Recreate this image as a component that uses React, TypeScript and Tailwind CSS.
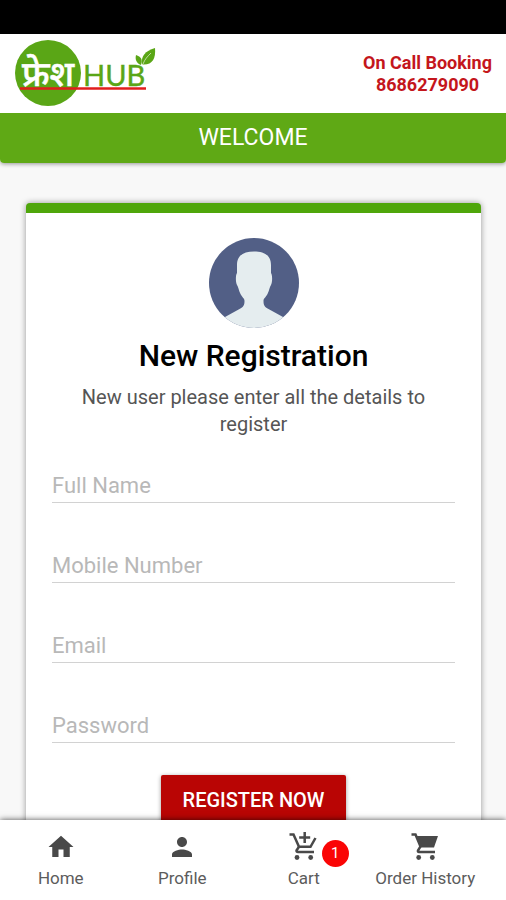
import React, { useState } from 'react';
import { MdHome, MdPerson } from 'react-icons/md';

const CartAddIcon: React.FC<{ size: number }> = ({ size }) => (
  <svg viewBox="0 0 30 30" width={size} height={size} fill="none" stroke="currentColor" strokeWidth="2.500" aria-hidden="true">
    <path d="M0.500 2.500H4.500L10 14.800H21.500L26.500 6" />
    <path d="M10 14.800L7.500 18.500Q7.300 20 9 20H25" />
    <path d="M15.700 0V11M10.200 5.500H21.200" />
    <circle cx="8" cy="25.500" r="2.400" fill="currentColor" stroke="none" />
    <circle cx="21.700" cy="25.500" r="2.400" fill="currentColor" stroke="none" />
  </svg>
);

const CartIcon: React.FC<{ size: number }> = ({ size }) => (
  <svg viewBox="0 0 30 30" width={size} height={size} fill="none" stroke="currentColor" strokeWidth="2.500" aria-hidden="true">
    <path d="M1.500 2.500H5.500L10.500 14.500L8 18.500Q7.500 20 9 20H25" />
    <path d="M5.500 4H28L24 15.500H10.500Z" fill="currentColor" stroke="none" />
    <circle cx="8.700" cy="25.500" r="2.400" fill="currentColor" stroke="none" />
    <circle cx="22.300" cy="25.500" r="2.400" fill="currentColor" stroke="none" />
  </svg>
);

const fields = [
  { name: 'fullName', label: 'Full Name', type: 'text' },
  { name: 'mobile', label: 'Mobile Number', type: 'tel' },
  { name: 'email', label: 'Email', type: 'email' },
  { name: 'password', label: 'Password', type: 'password' },
];

const tabs = [
  { label: 'Home', icon: MdHome, count: 0 },
  { label: 'Profile', icon: MdPerson, count: 0 },
  { label: 'Cart', icon: CartAddIcon, count: 1 },
  { label: 'Order History', icon: CartIcon, count: 0 },
];

const Logo: React.FC = () => (
  <svg viewBox="0 0 144 68" className="w-36 h-17" role="img" aria-label="Fresh Hub">
    <circle cx="34" cy="33" r="33" fill="#5aa616" />
    <text x="8" y="46" fontSize="35" fontWeight="500" fill="#fff" stroke="#fff" strokeWidth="0.5" fontFamily="'Noto Sans Devanagari', 'Noto Sans', sans-serif">फ्रेश</text>
    <text x="69" y="46" fontSize="29" fill="#5aa616" stroke="#5aa616" strokeWidth="0.4" fontFamily="Lato, sans-serif">HUB</text>
    <path d="M6 48.5H132" stroke="#e11d1d" strokeWidth="2.5" />
    <path d="M128 24C127 16 131 11 141 8C142 19 138 25 129 24.5Z" fill="#5aa616" />
    <path d="M127 25C122 23 121 19 122 15C127 17 129 19 127 25Z" fill="#5aa616" />
    <path d="M129 24C131 19 133 17 137 13" stroke="#fff" strokeWidth="0.6" fill="none" />
  </svg>
);

const Avatar: React.FC = () => (
  <svg viewBox="0 0 90 90" className="size-[90px]" aria-hidden="true">
    <defs>
      <clipPath id="avatar">
        <circle cx="45" cy="45" r="45" />
      </clipPath>
    </defs>
    <g clipPath="url(#avatar)">
      <rect width="90" height="90" fill="#525f86" />
      <path
        d="M28 35V27C28 17 35 13.500 45 13.500S62 17 62 27V35C63.500 37 63.500 44 62 47C60.500 49 60.500 52 58.500 56C56.500 60 54.500 60 54.500 63C54.500 67 55.500 69 59.500 71L74 79L84 90H6L16 79L30.500 71C34.500 69 35.500 67 35.500 63C35.500 60 33.500 60 31.500 56C29.500 52 29.500 49 28 47C26.500 44 26.500 37 28 35Z"
        fill="#e5edef"
      />
    </g>
  </svg>
);

const App: React.FC = () => {
  const [values, setValues] = useState<Record<string, string>>({});

  return (
    <div className="flex flex-col h-screen overflow-hidden bg-[#f8f8f8] font-[Roboto,sans-serif]">
      {/* Status bar */}
      <div className="h-[34px] shrink-0 bg-black"></div>

      {/* Header */}
      <header className="shrink-0 rounded-b shadow-[0_1px_4px_rgba(0,0,0,0.4)]">
        <div className="flex items-center justify-between bg-white h-[79px] px-[14px]">
          <Logo />
          <a href="tel:8686279090" className="text-center text-[18px] leading-[22px] font-bold text-[#c4161c]">
            On Call Booking
            <br />
            8686279090
          </a>
        </div>
        <div className="flex items-center justify-center h-[50px] rounded-b bg-[#5fa915] text-white text-[23px]">WELCOME</div>
      </header>

      {/* Registration card */}
      <main className="flex-1 min-h-0 overflow-hidden pl-[26px] pr-[25px] pt-10">
        <form
          onSubmit={(e) => e.preventDefault()}
          className="flex flex-col items-center bg-white border-t-[10px] border-[#4fa60b] rounded-t px-[26px] pt-[25px] pb-10 shadow-[0_0_6px_rgba(0,0,0,0.4)]"
        >
          <Avatar />
          <h1 className="mt-3 text-[30px] leading-8 font-medium text-black">New Registration</h1>
          <p className="mt-3 px-6 text-center text-[20px] leading-[27px] text-[#555]">
            New user please enter all the details to register
          </p>

          <div className="flex flex-col gap-[43px] w-full mt-7">
            {fields.map((f) => (
              <input
                key={f.name}
                type={f.type}
                aria-label={f.label}
                placeholder={f.label}
                value={values[f.name] ?? ''}
                onChange={(e) => setValues({ ...values, [f.name]: e.target.value })}
                className="w-full h-[37px] pt-0.5 border-b border-[#d2d2d2] text-[22px] text-[#444] placeholder:text-[#b8b8b8] outline-none"
              />
            ))}
          </div>

          <button
            type="submit"
            className="mt-8 h-[50px] px-[22px] rounded-xs bg-[#b90504] text-white text-[20px] font-medium shadow-[0_1px_4px_rgba(0,0,0,0.4)]"
          >
            REGISTER NOW
          </button>
        </form>
      </main>

      {/* Bottom navigation */}
      <nav className="grid grid-cols-4 shrink-0 h-20 pr-5 bg-white shadow-[0_0_6px_rgba(0,0,0,0.7)] z-10">
        {tabs.map(({ label, icon: Icon, count }) => (
          <a key={label} href="#" className="flex flex-col items-center pt-3 text-[#494949]">
            <span className="relative">
              <Icon size={30} />
              {count > 0 && (
                <span className="absolute left-[33px] top-2 flex items-center justify-center size-[27px] rounded-full bg-[#fa0505] text-white text-[15px]">
                  {count}
                </span>
              )}
            </span>
            <span className="mt-1 text-[17px] leading-6 text-[#5c5c5c] whitespace-nowrap">{label}</span>
          </a>
        ))}
      </nav>
    </div>
  );
};

export default App;
